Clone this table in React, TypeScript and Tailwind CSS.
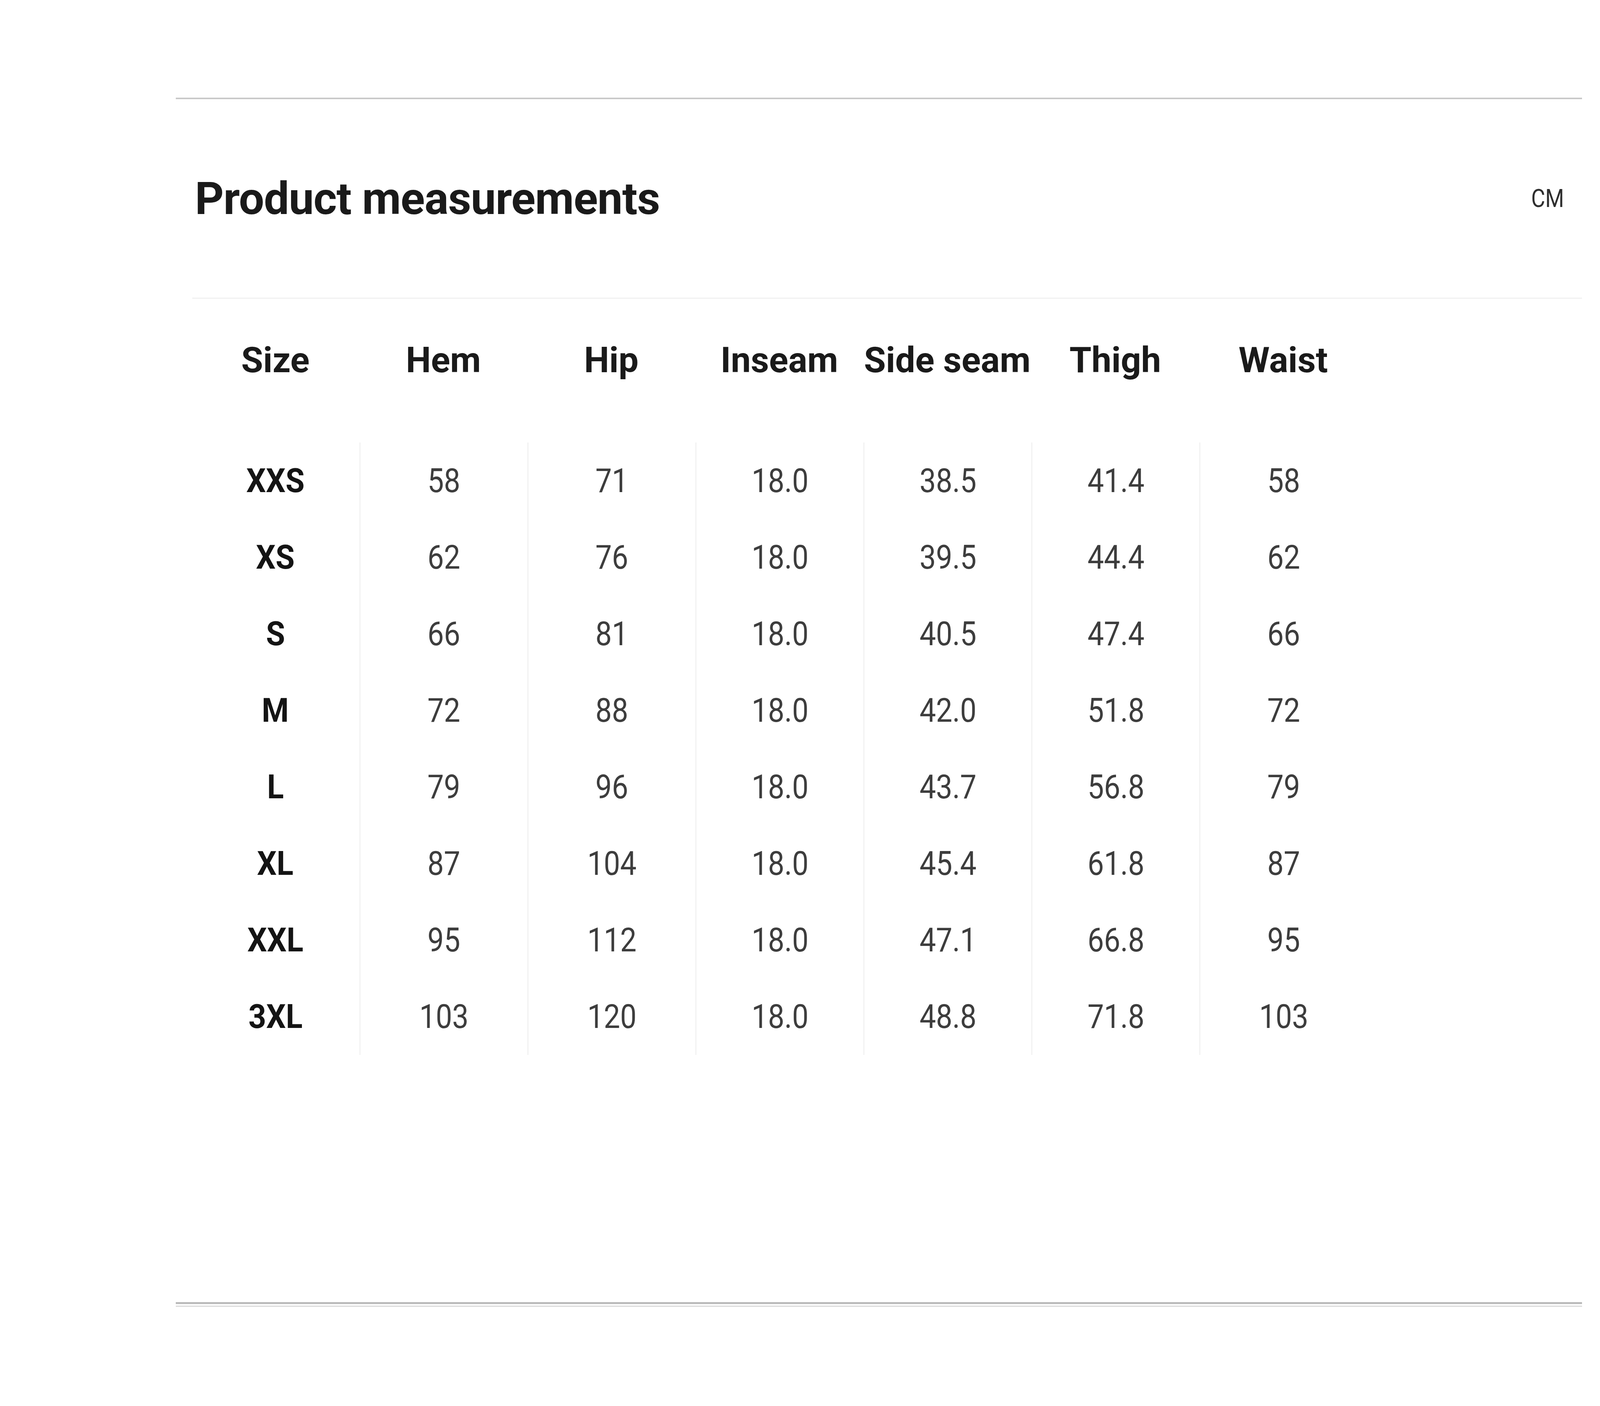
import React from "react";

const headers = ["Size", "Hem", "Hip", "Inseam", "Side seam", "Thigh", "Waist"];

const rows: string[][] = [
  ["XXS", "58", "71", "18.0", "38.5", "41.4", "58"],
  ["XS", "62", "76", "18.0", "39.5", "44.4", "62"],
  ["S", "66", "81", "18.0", "40.5", "47.4", "66"],
  ["M", "72", "88", "18.0", "42.0", "51.8", "72"],
  ["L", "79", "96", "18.0", "43.7", "56.8", "79"],
  ["XL", "87", "104", "18.0", "45.4", "61.8", "87"],
  ["XXL", "95", "112", "18.0", "47.1", "66.8", "95"],
  ["3XL", "103", "120", "18.0", "48.8", "71.8", "103"],
];

export default function App() {
  return (
    <div className="w-full h-[3600px] bg-white overflow-hidden">
      <div className="ml-[450px] w-[3600px] pt-[250px]">
        {/* top rule */}
        <div className="h-[4px] bg-[#c9c9c9]" />

        {/* title row */}
        <div className="h-[508px] flex items-center justify-between pl-[49px] pr-[46px]">
          <h1 className="font-['Roboto',sans-serif] font-bold text-[115px] leading-none text-[#1a1a1a] tracking-[-1px]">
            Product measurements
          </h1>
          <span className="inline-block origin-right scale-x-[0.85] font-['Roboto',sans-serif] text-[65px] leading-none text-[#2e2e2e]">
            CM
          </span>
        </div>

        {/* light rule */}
        <div className="ml-[42px] h-[3px] bg-[#f1f1f1]" />

        {/* table */}
        <div className="ml-[40px] w-[3010px]">
          <div className="grid grid-cols-7 h-[314px] items-center">
            {headers.map((h) => (
              <div
                key={h}
                className="text-center font-['Roboto',sans-serif] font-bold text-[91px] leading-none text-[#1a1a1a] whitespace-nowrap"
              >
                {h}
              </div>
            ))}
          </div>

          <div className="mt-[54px]">
            {rows.map((r) => (
              <div key={r[0]} className="grid grid-cols-7 h-[196px]">
                {r.map((v, i) =>
                  i === 0 ? (
                    <div
                      key={i}
                      className="flex items-center justify-center font-['Roboto',sans-serif] font-bold text-[86px] leading-none text-[#141414]"
                    >
                      <span className="inline-block scale-x-[0.92]">{v}</span>
                    </div>
                  ) : (
                    <div
                      key={i}
                      className="flex items-center justify-center border-l-[3px] border-[#f2f2f2] font-['Roboto',sans-serif] text-[86px] leading-none text-[#3d3d3d]"
                    >
                      <span className="inline-block scale-x-[0.87]">{v}</span>
                    </div>
                  )
                )}
              </div>
            ))}
          </div>
        </div>

        {/* bottom double rule */}
        <div className="mt-[633px]">
          <div className="h-[5px] bg-[#bababa]" />
          <div className="mt-[4px] h-[3px] bg-[#dadada]" />
        </div>
      </div>
    </div>
  );
}
